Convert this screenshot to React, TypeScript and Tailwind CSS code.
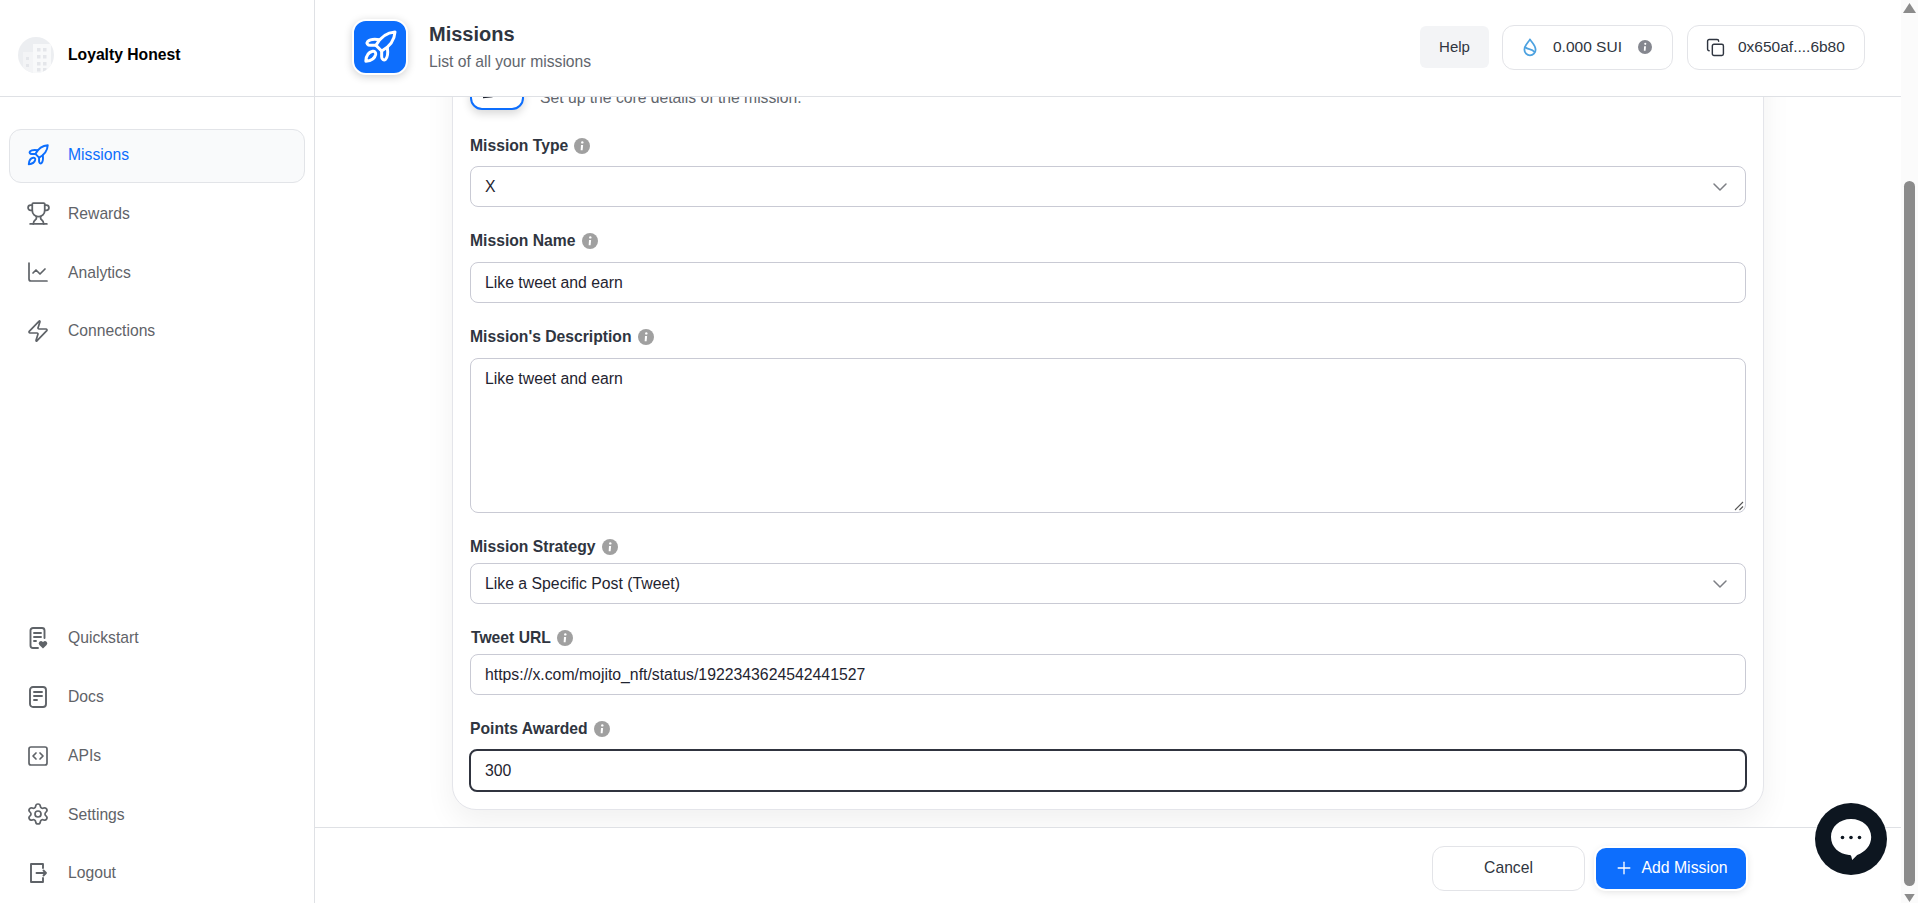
import React from "react";
import { Trophy, ChartLine, Zap, SquareCode, Settings, Copy, ChevronDown, Plus } from "lucide-react";

function Rocket({ className }: { className?: string }) {
  return (
    <svg viewBox="0 0 24 24" fill="none" stroke="currentColor" strokeWidth="1.8" strokeLinejoin="round" strokeLinecap="round" className={className}>
      <path d="M21 3C16.2 3.3 12.2 6.2 9.6 11L13 14.4C17.8 11.8 20.7 7.8 21 3Z" />
      <path d="M9.6 11H6.2C4.6 11 3.7 9.7 4.6 8.7C5.8 7.5 8.2 7.1 11.6 7.6" />
      <path d="M13 14.4V17.8C13 19.4 14.3 20.3 15.3 19.4C16.5 18.2 16.9 15.8 16.4 12.4" />
      <path d="M7.6 14.6C5.2 15.1 3.7 17 3.5 20.5C6.9 20.3 8.9 18.8 9.4 16.4C9.6 15.2 8.8 14.4 7.6 14.6Z" />
    </svg>
  );
}

function Quickstart({ className }: { className?: string }) {
  return (
    <svg viewBox="0 0 24 24" fill="none" stroke="currentColor" strokeWidth="1.9" strokeLinecap="round" strokeLinejoin="round" className={className}>
      <path d="M12 22H7a2.500 2.500 0 0 1-2.500-2.500v-15A2.500 2.500 0 0 1 7 2h9a2.500 2.500 0 0 1 2.500 2.500V12" />
      <path d="M8 7h7M8 11h7M8 15h2" />
      <path fill="currentColor" stroke="none" d="M17 22.500l-3.600-3.500a2.300 2.300 0 0 1 3.200-3.300l.4.4.4-.4a2.300 2.300 0 0 1 3.200 3.300z" />
    </svg>
  );
}

function Docs({ className }: { className?: string }) {
  return (
    <svg viewBox="0 0 24 24" fill="none" stroke="currentColor" strokeWidth="1.9" strokeLinecap="round" strokeLinejoin="round" className={className}>
      <rect x="4" y="2" width="16" height="20" rx="3" />
      <path d="M8 7h8M8 11h8M8 15h3" />
    </svg>
  );
}

function Logout({ className }: { className?: string }) {
  return (
    <svg viewBox="0 0 24 24" fill="none" stroke="currentColor" strokeWidth="1.9" strokeLinecap="round" strokeLinejoin="round" className={className}>
      <path d="M17 7V3H5v18h12v-4" />
      <path d="M10.500 12H20M17.500 9.500l2.500 2.500-2.500 2.500" />
    </svg>
  );
}

function Info({ className }: { className?: string }) {
  return (
    <svg viewBox="0 0 16 16" className={className}>
      <circle cx="8" cy="8" r="8" fill="currentColor" />
      <circle cx="8.300" cy="4.400" r="1.200" fill="#fff" />
      <path d="M7 7h2.100l-.5 5.300H6.700z" fill="#fff" />
    </svg>
  );
}

function Building() {
  return (
    <div className="relative w-[36px] h-[36px] rounded-full bg-[#eceef1] overflow-hidden shrink-0">
      <svg viewBox="0 0 36 36" className="w-full h-full">
        <rect x="5" y="15" width="12" height="21" fill="#f3f4f6" />
        <rect x="15" y="7" width="18" height="29" fill="#f8f9fa" />
        <g fill="#e4e6ea">
          <rect x="19" y="11" width="3.500" height="3.500" />
          <rect x="25" y="11" width="3.500" height="3.500" />
          <rect x="19" y="18" width="3.500" height="3.500" />
          <rect x="25" y="18" width="3.500" height="3.500" />
          <rect x="19" y="25" width="3.500" height="3.500" />
          <rect x="25" y="25" width="3.500" height="3.500" />
          <rect x="19" y="31" width="3.500" height="3.500" />
          <rect x="25" y="31" width="3.500" height="3.500" />
          <rect x="8" y="20" width="3" height="3" />
          <rect x="8" y="27" width="3" height="3" />
        </g>
      </svg>
    </div>
  );
}

function NavItem({ icon, label, active, top }: { icon: React.ReactNode; label: string; active?: boolean; top?: boolean }) {
  return (
    <div
      className={
        (active
          ? "h-[54px] mx-[9px] pl-[16px] flex items-center gap-[18px] rounded-[12px] border border-[#e2e4e8] bg-[#f9fafb] text-[#0d6efd] text-[15.7px]"
          : "h-[54px] mx-[9px] pl-[16px] flex items-center gap-[18px] rounded-[12px] border border-transparent text-[#5f6368] text-[15.7px]") +
        (top ? " pb-[2px]" : "")
      }
    >
      <span className="w-[24px] h-[24px] flex items-center justify-center shrink-0">{icon}</span>
      <span>{label}</span>
    </div>
  );
}

function Label({ text, className }: { text: string; className: string }) {
  return (
    <div className={"h-[20px] flex items-center gap-[6px] font-bold text-[15.7px] text-[#2f3540] " + className}>
      <span>{text}</span>
      <Info className="w-[16px] h-[16px] text-[#a0a0a0]" />
    </div>
  );
}

function Box({ value, chevron, focused }: { value: string; chevron?: boolean; focused?: boolean }) {
  return (
    <div
      className={
        focused
          ? "h-[43px] -mx-px px-[14px] flex items-center justify-between rounded-[8px] border-2 border-[#30343f] bg-white text-[15.8px] text-[#1f2430]"
          : "h-[41px] px-[14px] flex items-center justify-between rounded-[8px] border border-[#c9cad4] bg-white text-[15.8px] text-[#1f2430]"
      }
    >
      <span>{value}</span>
      {chevron && <ChevronDown className="w-[24px] h-[24px] text-[#7d7f85] mr-[-1px]" strokeWidth={1.5} />}
    </div>
  );
}

export default function App() {
  return (
    <div className="h-[903px] w-full flex overflow-hidden bg-white font-['Liberation_Sans',Arial,sans-serif]">
      <aside className="w-[315px] shrink-0 flex flex-col border-r border-[#dfe1e5]">
        <div className="h-[97px] shrink-0 flex items-center gap-[14px] pl-[18px] pt-[14px] border-b border-[#dfe1e5]">
          <Building />
          <span className="font-bold text-[15.7px] text-black">Loyalty Honest</span>
        </div>
        <nav className="flex flex-col gap-[4.7px] pt-[32px]">
          <NavItem top active label="Missions" icon={<Rocket className="w-[26px] h-[26px] shrink-0" />} />
          <NavItem top label="Rewards" icon={<Trophy className="w-[25px] h-[25px] shrink-0" strokeWidth={1.7} />} />
          <NavItem top label="Analytics" icon={<ChartLine className="w-[24px] h-[24px] shrink-0" strokeWidth={1.7} />} />
          <NavItem top label="Connections" icon={<Zap className="w-[24px] h-[24px] shrink-0" strokeWidth={1.7} />} />
        </nav>
        <nav className="mt-auto flex flex-col gap-[4.7px] pb-[3px]">
          <NavItem label="Quickstart" icon={<Quickstart className="w-[24px] h-[24px] shrink-0" />} />
          <NavItem label="Docs" icon={<Docs className="w-[24px] h-[24px] shrink-0" />} />
          <NavItem label="APIs" icon={<SquareCode className="w-[24px] h-[24px] shrink-0" strokeWidth={1.7} />} />
          <NavItem label="Settings" icon={<Settings className="w-[24px] h-[24px] shrink-0" strokeWidth={1.7} />} />
          <NavItem label="Logout" icon={<Logout className="w-[24px] h-[24px] shrink-0" />} />
        </nav>
      </aside>

      <main className="flex-1 min-w-0 flex flex-col">
        <header className="h-[97px] shrink-0 flex items-center pl-[37px] pr-[36px] pb-[2px] border-b border-[#dfe1e5] relative z-10 bg-white">
          <div className="w-[56px] h-[56px] rounded-[14px] bg-[#0d6efd] border-2 border-white shadow-[0_2px_8px_rgba(0,0,0,0.18)] flex items-center justify-center text-white">
            <Rocket className="w-[40px] h-[40px] shrink-0" />
          </div>
          <div className="ml-[21px] mb-[1px] flex flex-col">
            <span className="font-bold text-[20px] leading-[26px] text-[#2f3540]">Missions</span>
            <span className="text-[15.7px] leading-[20px] mt-[5px] text-[#62666d]">List of all your missions</span>
          </div>
          <div className="ml-auto flex items-center">
            <div className="w-[69px] h-[42px] rounded-[6px] bg-[#f3f4f6] flex items-center justify-center text-[15px] text-[#2f3540]">Help</div>
            <div className="ml-[13px] w-[171px] h-[45px] rounded-[12px] border border-[#e3e4e8] flex items-center pl-[18px] text-[15.5px] text-[#2f3540]">
              <svg viewBox="0 0 20 24" className="w-[18px] h-[22px] text-[#4da2e0]" fill="none" stroke="currentColor" strokeWidth="2" strokeLinejoin="round" strokeLinecap="round">
                <path d="M10 3.500C8 7 3.800 10 3.800 15a6.200 6.200 0 0 0 12.400 0c0-5-4.200-8-6.200-11.500Z" />
                <path d="M5 12.500c3 2.500 7 1 10 5" />
              </svg>
              <span className="ml-[14px]">0.000 SUI</span>
              <Info className="ml-[16px] w-[14px] h-[14px] text-[#85878f]" />
            </div>
            <div className="ml-[14px] w-[178px] h-[45px] rounded-[12px] border border-[#e3e4e8] flex items-center pl-[18px] text-[15.5px] text-[#2f3540]">
              <Copy className="w-[19px] h-[19px]" strokeWidth={1.8} />
              <span className="ml-[13px]">0x650af....6b80</span>
            </div>
          </div>
        </header>

        <section className="flex-1 min-h-0 overflow-hidden">
          <div className="mt-[-62px] mx-auto w-[1312px] rounded-[24px] border border-[#e4e5ea] bg-white pt-[20px] px-[17px] pb-[17px] shadow-[0_12px_30px_rgba(0,0,0,0.06)]">
            <div className="flex items-end gap-[16px] mb-[26px]">
              <div className="w-[54px] h-[54px] rounded-[12px] border-2 border-[#0d6efd] bg-white shadow-[0_4px_8px_rgba(0,0,0,0.15)] flex items-center justify-center">
                <svg viewBox="0 0 24 24" className="w-[32px] h-[32px] text-[#1f2430]" fill="currentColor">
                  <path d="M1.500 21.500L9 22.600L1.500 23.400Z" />
                </svg>
              </div>
              <span className="text-[15.7px] leading-[20px] mb-[2px] text-[#62666d]">Set up the core details of the mission.</span>
            </div>

            <Label text="Mission Type" className="mb-[10px]" />
            <Box value="X" chevron />

            <Label text="Mission Name" className="mt-[24px] mb-[11px]" />
            <Box value="Like tweet and earn" />

            <Label text="Mission's Description" className="mt-[24px] mb-[11px]" />
            <div className="relative h-[155px] px-[14px] py-[11px] rounded-[8px] border border-[#c9cad4] text-[15.8px] leading-[18px] text-[#1f2430]">
              Like tweet and earn
              <svg viewBox="0 0 12 12" className="absolute right-[1px] bottom-[1px] w-[12px] h-[12px] text-[#555]" stroke="currentColor" strokeWidth="1.100">
                <path d="M11 3L3 11M11 7.500L7.500 11" />
              </svg>
            </div>

            <Label text="Mission Strategy" className="mt-[24px] mb-[6px]" />
            <Box value="Like a Specific Post (Tweet)" chevron />

            <Label text="Tweet URL" className="mt-[24px] mb-[6px] pl-[1px]" />
            <Box value="https://x.com/mojito_nft/status/1922343624542441527" />

            <Label text="Points Awarded" className="mt-[24px] mb-[10px]" />
            <Box value="300" focused />
          </div>
        </section>

        <footer className="h-[76px] shrink-0 flex items-center justify-end gap-[11px] pr-[155px] pt-[5px] border-t border-[#dfe1e5] bg-white">
          <div className="w-[153px] h-[45px] rounded-[12px] border border-[#e3e4e8] flex items-center justify-center text-[15.7px] text-[#2f3540]">Cancel</div>
          <div className="w-[150px] h-[41px] rounded-[10px] bg-[#0d6efd] ring-2 ring-white shadow-[0_2px_8px_rgba(0,0,0,0.15)] flex items-center justify-center gap-[7px] text-[15.8px] text-white">
            <Plus className="w-[20px] h-[20px] shrink-0" strokeWidth={1.6} />
            <span>Add Mission</span>
          </div>
        </footer>
      </main>

      <div className="w-[17px] shrink-0 bg-[#fbfbfb] flex flex-col items-center relative z-20">
        <svg viewBox="0 0 13 10" className="w-[13px] h-[10px] mt-[3px] text-[#8b8b8b]" fill="currentColor">
          <path d="M6.500 0L13 10H0z" />
        </svg>
        <div className="w-[11px] h-[705px] mt-[168px] rounded-full bg-[#8b8b8b]" />
        <svg viewBox="0 0 13 10" className="w-[13px] h-[8px] mt-[8px] text-[#8b8b8b]" fill="currentColor">
          <path d="M0 0H13L6.500 10z" />
        </svg>
      </div>

      <div className="absolute left-[1815px] top-[803px] w-[72px] h-[72px] rounded-full bg-[#0d1620] flex items-center justify-center z-30">
        <svg viewBox="0 0 48 48" className="w-[48px] h-[48px] shrink-0">
          <path d="M24 4C12.400 4 4 11.800 4 22c0 10 8 17 18 18 1 0 2 .4 2.200 1l1 4 5-5c8-3 14-9.500 14-18C44 11.800 35.600 4 24 4Z" fill="#fff" />
          <circle cx="15.500" cy="22.500" r="1.800" fill="#0d1620" />
          <circle cx="24" cy="22.500" r="1.800" fill="#0d1620" />
          <circle cx="32.500" cy="22.500" r="1.800" fill="#0d1620" />
        </svg>
      </div>
    </div>
  );
}
